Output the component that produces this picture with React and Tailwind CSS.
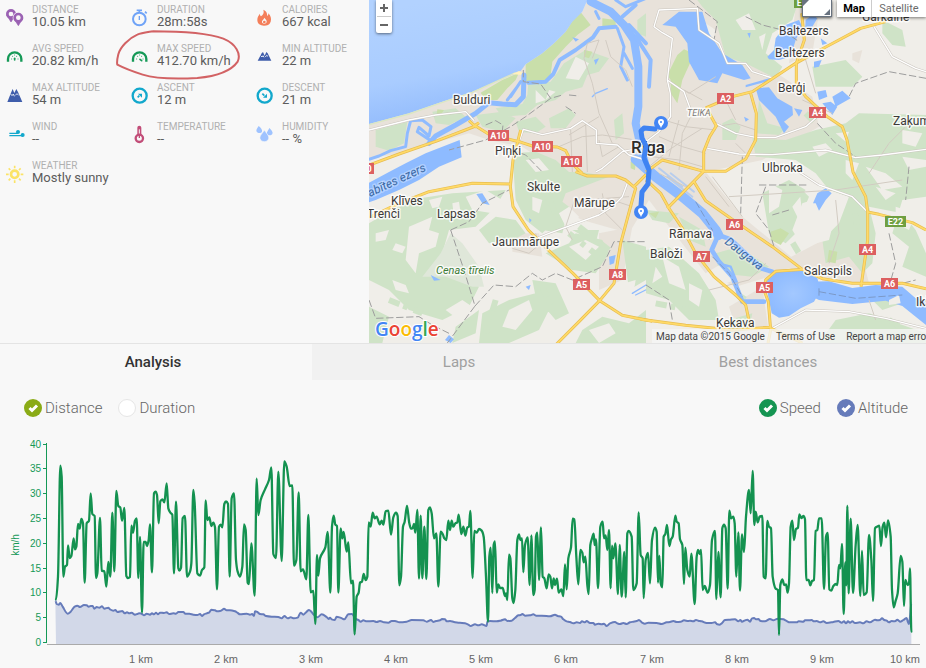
import React, { useState } from "react";

const purple = "#9b62b3";
const green = "#159957";
const navy = "#3f5dab";
const teal = "#12a8cc";

function Pin({ x, y }) {
  return (
    <g transform={`translate(${x} ${y})`}>
      <path d="M-13 3 L0 24 L13 3Z" fill={purple} stroke={purple} strokeWidth="2" strokeLinejoin="round" />
      <circle r="11" fill="#f8f8f8" stroke={purple} strokeWidth="8" />
    </g>
  );
}

function Gauge({ needle }) {
  return (
    <g>
      <path d="M6 41 V33 A19 19 0 0 1 46 33 V41" fill="none" stroke={green} strokeWidth="7" />
      <path d="M17 33h.1M20 25h.1M26 21h.1M32 25h.1M36 33h.1" stroke={green} strokeWidth="3" strokeLinecap="round" />
      <path d={needle} stroke={green} strokeWidth="5" strokeLinecap="round" />
    </g>
  );
}

const icons = {
  distance: (
    <g>
      <Pin x={15} y={15} />
      <circle cx="37" cy="26" r="17" fill="#f8f8f8" />
      <Pin x={37} y={26} />
    </g>
  ),
  duration: (
    <g fill="none" stroke="#6fa3f7">
      <circle cx="25" cy="30" r="19" strokeWidth="6" />
      <path d="M17 4H33" strokeWidth="5" />
      <path d="M25 5V12M42 8L47 13" strokeWidth="5" />
      <path d="M25 21V33" strokeWidth="4" />
    </g>
  ),
  calories: (
    <g>
      <path d="M22 2C34 7 33 16 34 21C37 19 37 16 37 13C44 20 47 29 44 38C41 47 33 50 24 50C13 50 4 44 4 33C4 24 8 20 11 14C12 18 13 20 15 22C21 17 25 12 22 2Z" fill="#f47f5a" />
      <path d="M25 26C28 30 33 33 32 39C31 43 29 44 25 44C20 44 17 41 18 37C19 33 24 31 25 26Z" fill="#f8f8f8" />
      <circle cx="25" cy="39" r="4" fill="#f47f5a" />
    </g>
  ),
  avg: <Gauge needle="M26 31V36" />,
  max: <Gauge needle="M27 34L32 38" />,
  minAlt: (
    <g fill={navy}>
      <path d="M5 38L17 16L21 12L26 23L31 12L35 16L46 38Z" />
      <path d="M14 23L18 27L21 23L24 28M28 27L32 22L36 25" stroke="#dfe5f2" strokeWidth="3" fill="none" />
    </g>
  ),
  maxAlt: (
    <g fill={navy}>
      <path d="M4 45L16 15L20 6L25 18L31 6L36 15L49 45Z" />
      <path d="M14 21L18 26L22 21L25 28M28 25L33 20L38 25" stroke="#dfe5f2" strokeWidth="3" fill="none" />
    </g>
  ),
  ascent: (
    <g>
      <circle cx="26" cy="26" r="21" fill="none" stroke={teal} strokeWidth="7" />
      <path d="M20 31L25 26" stroke={teal} strokeWidth="5" />
      <path d="M21 20H33V32Z" fill={teal} />
    </g>
  ),
  descent: (
    <g>
      <circle cx="26" cy="26" r="21" fill="none" stroke={teal} strokeWidth="7" />
      <path d="M19 20L25 26" stroke={teal} strokeWidth="5" />
      <path d="M33 20V32H21Z" fill={teal} />
    </g>
  ),
  wind: (
    <g stroke={teal} strokeWidth="4" fill={teal}>
      <path d="M10 22H36M10 29H50" />
      <circle cx="36" cy="18" r="4" />
      <circle cx="50" cy="27" r="4" />
    </g>
  ),
  temperature: (
    <g>
      <path d="M25 5V33" stroke="#c24d78" strokeWidth="12" strokeLinecap="round" />
      <path d="M25 10V30" stroke="#f8f8f8" strokeWidth="3" />
      <circle cx="25" cy="37" r="11" fill="#f8f8f8" stroke="#c24d78" strokeWidth="7" />
      <path d="M25 24V36" stroke="#c24d78" strokeWidth="4" />
    </g>
  ),
  humidity: (
    <g fill="#9fc3ff">
      <path d="M8 0C14 5 20 11 18 17C16 22 6 23 2 17C-1 11 4 7 8 0Z" />
      <path d="M40 6C46 12 52 18 49 24C46 29 36 29 33 24C31 18 38 12 40 6Z" />
      <path d="M25 13C32 22 40 30 38 38C35 50 15 50 12 38C10 30 19 22 25 13Z" stroke="#f8f8f8" strokeWidth="2" />
    </g>
  ),
  weather: (
    <g stroke="#fbe366" fill="none">
      <circle cx="26" cy="28" r="11" strokeWidth="8" />
      <path d="M26 2V10M26 46V54M0 28H8M44 28H52M8 10L13 15M39 41L44 46M44 10L39 15M13 41L8 46" strokeWidth="5" />
    </g>
  ),
};

const stats = [
  ["distance", "DISTANCE", "10.05 km"],
  ["duration", "DURATION", "28m:58s"],
  ["calories", "CALORIES", "667 kcal"],
  ["avg", "AVG SPEED", "20.82 km/h"],
  ["max", "MAX SPEED", "412.70 km/h"],
  ["minAlt", "MIN ALTITUDE", "22 m"],
  ["maxAlt", "MAX ALTITUDE", "54 m"],
  ["ascent", "ASCENT", "12 m"],
  ["descent", "DESCENT", "21 m"],
  ["wind", "WIND", "--"],
  ["temperature", "TEMPERATURE", "--"],
  ["humidity", "HUMIDITY", "-- %"],
  ["weather", "WEATHER", "Mostly sunny"],
];

function Stats() {
  return (
    <section className="relative w-[369px] shrink-0">
      <dl className="grid auto-rows-[39px] grid-cols-[125px_125px_1fr] pl-1.5">
        {stats.map(([icon, label, value]) => (
          <div key={label} className="flex gap-2">
            <svg viewBox="0 0 54 54" className="mt-[9px] size-[18px] shrink-0 overflow-visible" aria-hidden="true">
              {icons[icon]}
            </svg>
            <div className="pt-[5px] whitespace-nowrap">
              <dt className="text-[10px] leading-[10px] text-[#b0b0b0]">{label}</dt>
              <dd className="text-[13px] leading-[14px] text-[#5c5c5c]">{value}</dd>
            </div>
          </div>
        ))}
      </dl>
      <svg viewBox="0 0 372 153" className="absolute top-[29px] left-[116px] w-[124px]" aria-hidden="true">
        <path
          d="M110 7C92 10 75 12 64 17C38 28 12 55 7 76C3 92 2 100 4 107C25 118 52 128 80 137C115 148 170 151 244 147C300 142 345 127 365 98C376 74 360 45 322 29C280 14 210 7 110 7"
          fill="none" stroke="#d26264" strokeWidth="6"
        />
      </svg>
    </section>
  );
}

const WATER = "#8ebbff";
const FOREST = "#cfe3c7";
const OPEN = "#f0eee9";
const URBAN = "#e8e2da";
const PARK = "#c9dfaa";

const places = [
  ["Bulduri", 84, 104], ["Piņķi", 126, 155], ["Baltezers", 410, 35], ["Baltezers", 406, 57],
  ["Berģi", 409, 92], ["Zaķumuiža", 524, 125], ["Ulbroka", 393, 172], ["Garkalne", 493, 21],
  ["Skulte", 158, 191], ["Mārupe", 205, 207], ["Klīves", 22, 205], ["Trenči", -2, 218],
  ["Lapsas", 68, 218], ["Jaunmārupe", 123, 246], ["Rāmava", 300, 238], ["Baloži", 281, 258],
  ["Salaspils", 435, 275], ["Ķekava", 347, 327], ["Ikšķile", 547, 306],
];

const shields = [
  ["A10", 119, 130], ["A10", 163, 141], ["A10", 192, 156], ["A2", 348, 93], ["A4", 440, 107],
  ["A5", 204, 279], ["A8", 240, 269], ["A6", 357, 219], ["A7", 324, 251], ["A5", 387, 282],
  ["A4", 490, 244], ["A6", 512, 278], ["E22", 516, 216], ["A10", -16, 163], ["E77", 425, -3],
];

const highways = [
  "M-5 497L90 462L200 424L320 378L362 404L450 425L490 438L565 441L590 452L610 492L640 520",
  "M300 362L322 382M315 378L330 368",
  "M455 390L432 480L424 560L432 620L478 690L540 752L612 820L692 902L760 946L850 964",
  "M424 552L310 550L180 575L90 610L-5 655",
  "M692 902L630 965L560 1035M692 902L735 850L755 730L790 600L800 565L770 540L740 528L655 528L620 515",
  "M831 524L795 560",
  "M1550 65L1475 85L1376 138L1280 190L1213 234L1150 275L1090 290L1012 323L1042 378L1022 410L1004 455L1004 514H1070L1130 477L1160 420L1162 340L1145 280",
  "M1298 40L1306 120L1282 190L1282 250L1310 290L1375 350L1420 380L1434 420L1452 516L1490 590L1496 636V720L1476 860",
  "M831 540L845 552L875 580L900 625L940 685L980 760L1035 830L1100 885L1130 915L1145 985",
  "M895 625L1004 514M1004 514L880 480L831 516M975 545L1010 602L1100 665L1210 740L1300 808L1360 836L1450 850H1600L1671 866",
  "M1496 636L1530 643L1630 668L1671 690",
  "M1306 808L1220 814L1190 840L1185 870L1198 905L1205 990L1197 1029M815 958L950 976L1090 990L1200 982L1300 1029",
];

const minorRoads = [
  "M0 390L120 360L200 345L290 335L315 362",
  "M450 425L463 388L520 404L605 385L640 362L682 390V430L745 435L780 465L831 480",
  "M831 440L760 455L700 505L680 516M490 720L540 700L690 645L730 620L760 590L775 550",
  "M831 425L870 395L905 350L904 280L895 240L910 115L880 98L855 80L870 30L985 25L990 90L1050 130L1075 190L1130 190L1150 215L1210 234",
  "M895 240L945 275L965 330M1040 370L1100 400L1160 412H1220L1310 380L1350 345",
  "M1015 445L1110 462L1210 464L1370 450L1460 473L1540 465L1671 448",
  "M1515 80L1570 170L1640 205L1671 215M1290 516L1350 555L1450 590L1496 636",
  "M1210 985L1310 930L1440 935L1550 955L1671 985",
];

const streets =
  "M670 175L690 120L655 130L645 175L670 250L690 340L730 430M600 405L690 350M570 440L640 410L700 405L800 420M605 390L610 516M650 370L655 516M690 420L700 470L750 440M710 120L725 170L770 210L790 260M840 500L900 450L960 410L1000 385M850 470L930 480L1000 500M870 410L940 440L1010 460M885 360L950 380L1040 390M930 360L900 470M965 350L940 400L930 510M895 240L960 280L1040 230M945 270L1000 300M1040 380L1100 370L1160 390M1100 430L1140 470M1070 300L1100 360M870 520L950 560M1010 530L1080 620M1030 530L1120 650M1080 590L1400 570L1600 540M1310 180L1340 280M1300 300L1390 340M620 590L590 680L610 720M700 580L710 640L760 690M640 600L780 590M730 600L790 620M430 745L480 760L510 735L500 700M1400 600L1410 700L1380 790M1020 870L1140 840L1190 790M1500 900L1520 960M1640 350L1560 430L1500 520";

const boundaries =
  "M463 210V245L515 252L545 295L580 285M545 295L470 350L425 380L350 420L240 450M350 375L380 362L402 375L400 392M400 440L470 465L520 516M600 285L630 288M590 320L620 340M960 0L1045 65L1035 120M1130 50L1180 75L1240 90L1290 125M1671 235L1560 215L1460 250L1440 290M1345 370L1400 430L1460 470M245 690L300 665L340 610L420 570M245 690L285 810L318 918L235 1029M318 918L375 855L440 860L490 820L520 840L560 820L610 840L700 800L735 725H831M0 900L20 955L150 950L190 975L240 1000M1120 470L1115 640M1190 560L1160 640L1200 690L1215 740M1170 555L1320 555M1560 700L1580 790L1560 860L1640 840M831 855L900 900L910 960M1620 500L1610 600M1210 645L1260 630";

function RigaMap() {
  return (
    <svg viewBox="0 0 557 343" preserveAspectRatio="xMinYMin slice" className="absolute inset-0 size-full" role="img" aria-label="Map of Rīga with route">
      <defs>
        <linearGradient id="sea" x1="0.3" y1="0" x2="0.62" y2="1">
          <stop offset="0" stopColor="#b2d2ff" />
          <stop offset="0.55" stopColor="#a9ccff" />
          <stop offset="1" stopColor="#8ab5fb" />
        </linearGradient>
        <radialGradient id="reservoir">
          <stop offset="0" stopColor="#a3c8ff" />
          <stop offset="1" stopColor={WATER} />
        </radialGradient>
      </defs>
      <rect width="557" height="343" fill={OPEN} />
      <g transform="scale(0.333333)" strokeLinejoin="round">
        <path fill={URBAN} d="M0 372L220 305L450 213L640 35L655 0H1000L1060 60L1130 170L1240 230L1330 290L1350 380L1180 480L1010 516L1120 650L1290 790L1200 830L1100 860L1010 820L900 680L840 600L780 700L640 660L560 620L590 520L520 480L460 440L360 420L300 400L210 425L100 460L0 475ZM430 700L510 700L520 770L430 755ZM1280 20L1350 40L1330 160L1260 190ZM1230 790L1400 700L1480 820L1340 840ZM1080 920L1180 860L1200 1000L1110 1010ZM690 700L790 680L760 840L690 870ZM1370 790L1480 770L1500 850L1420 850ZM1450 160L1480 150L1470 190L1450 180Z" />
        <path fill={FOREST} d="
          M478 250L545 245L585 190L650 150L720 175L690 215L655 225L640 262L590 275L560 300L505 315L470 345L400 350L380 325L460 312L475 285Z
          M20 390L115 365L105 430L60 452L20 440Z M190 335L260 325L290 350L240 375L200 370Z M320 345L400 335L440 355L400 395L340 380Z
          M440 365L500 350L530 380L500 400L450 395Z M540 355L600 325L620 345L590 385L545 385Z M735 360L760 340L765 400L740 420Z
          M430 460L500 455L560 480L600 516H640L720 530L590 580L560 660L520 700L470 660L440 600Z
          M805 60L831 40V110L805 100Z
          M985 0H1290L1270 60L1210 100L1190 160L1240 200L1220 235L1130 190L1070 170L1040 60L1000 20Z
          M1330 200L1430 180L1480 230L1450 260L1340 260Z M1540 60L1600 90L1610 140L1570 135L1540 100Z
          M1060 370L1090 355L1115 380L1100 420L1060 420Z M1170 300L1195 370L1250 385L1230 405L1160 400Z
          M1150 415L1250 420L1340 390L1430 370L1470 340L1671 345V590L1600 600L1570 700L1620 740L1600 800L1671 830V760L1640 690L1600 640L1500 620L1520 700L1510 790L1480 820L1440 770L1370 790L1360 720L1410 670L1440 590L1380 570L1340 520L1280 480L1160 470Z
          M1180 580L1260 540L1310 570L1270 620L1300 680L1250 730L1200 700L1190 640Z
          M1290 560L1320 590L1300 640Z
          M0 670L120 600L250 580L410 570L380 620L320 680L240 690L220 760L330 860L300 920L220 960L120 930L60 870L0 840Z
          M330 690L380 650L440 660L470 700L430 720L360 730Z M440 560L520 560L600 620L580 700L520 690Z
          M530 760L600 730L620 700L700 720L720 760L680 820L610 810Z M610 690L690 690L680 730Z
          M340 940L420 900L500 880L540 930L510 990L420 1029H330Z M490 840L560 850L600 940L560 960L500 890Z
          M700 950L780 970L831 930V1029H620L640 990Z M760 720L831 740V840L780 870Z
          M831 750L900 740L990 820L1040 900L1050 960L960 960L900 900L831 880Z
          M1040 760L1110 740L1200 800L1150 830L1050 820Z M1080 960L1150 940L1140 990L1080 1000Z
          M831 630L930 640L900 670L850 660Z M930 650L1000 690L1010 740L960 720Z
          M1400 960L1500 940L1671 1000V1029H1350Z M1500 890L1560 880L1600 910L1540 930Z
          M250 1029L260 980L330 930L320 1000Z M0 920L60 950L40 1029H0Z" />
        <path fill="#dfe7d9" d="M245 700L280 730L330 800L345 860L310 860L230 830L160 830L215 760Z" />
        <path fill={OPEN} d="
          M500 270L530 300L500 310Z M540 270L560 275L530 300Z M620 170L660 190L630 240L590 235Z M470 480L510 475L540 510L500 516Z
          M570 640L600 620L630 650L600 700Z M120 680L190 650L180 690L210 700L200 740L150 760L140 820L110 780Z
          M180 600L220 590L210 620L190 625Z M80 730L110 740L100 760L70 750Z M70 840L110 855L120 880L80 870Z
          M290 590L350 570L400 600L370 640L310 630Z M400 760L450 770L480 800L440 840L390 850Z M230 930L280 900L310 920L270 960Z
          M420 930L480 900L490 930L440 990L400 980Z M560 700L600 720L570 740Z M600 740L650 720L690 740L650 780Z
          M1330 440L1370 430L1390 450L1350 470Z M1200 550L1240 570L1230 620L1200 640Z M1490 500L1550 520L1600 560L1540 570Z
          M1600 390L1660 400L1640 440L1600 430Z M1010 820L1060 790L1100 840L1040 860Z M880 770L930 800L950 870L900 850Z
          M1100 60L1140 40L1160 90L1120 90Z M1580 620L1640 640L1620 690L1580 670Z M730 860L800 840L790 900L740 900Z
          M1300 610L1360 590L1400 640L1380 720L1300 740L1270 690Z M1540 680L1580 720L1560 770L1530 740Z
          M20 700L60 690L50 720L20 725Z M250 610L270 605L275 640L255 650Z M40 640L80 630L70 660Z M490 590L520 600L510 640L490 630Z
          M1430 480L1470 490L1450 540L1430 520Z M1600 470L1671 480V500L1620 510Z M1190 480L1240 485L1230 500L1190 498Z M1520 560L1580 580L1550 600Z M1400 400L1440 395L1430 425Z
          M1010 70L1040 90L1030 130L1010 110Z M1170 110L1190 100L1180 150Z M860 800L880 830L850 850Z M960 850L1000 870L990 920L960 900Z M660 990L720 970L740 1000L690 1029Z" />
        <path fill="none" stroke={FOREST} strokeWidth="18" d="M600 700L690 770M630 680L720 750M60 900L160 940M560 640L520 560M1230 660L1290 760M1460 640L1470 740M520 860L560 940M1310 340L1340 370M1560 960L1640 1010M860 910L960 930M1100 880L1130 900M380 900L350 1000" strokeDasharray="34 12 14 20" />
        <path fill={PARK} d="M470 193L520 160L555 130L590 95L630 30L665 75L625 105L590 140L550 185L545 225L530 243L470 243ZM335 278L400 240L450 218L440 240L415 265L385 300L350 300ZM700 55L740 60V82L700 78ZM645 150L670 155L660 175L645 170ZM205 328L225 330L215 345H203ZM925 165L945 148L962 155L965 185L940 240L925 310L905 280L905 240L895 225ZM1205 695L1235 685L1260 700L1235 735L1205 720ZM1380 750L1405 755L1400 790L1375 785ZM785 485L800 485L798 510L785 505ZM840 640L870 635L860 655Z" />
        <path fill="url(#sea)" d="M0 0H655L640 35L610 65L590 95L555 130L520 160L470 193L455 213L380 245L310 275L220 305L120 340L0 372Z" />
        <path fill="none" stroke="#dbe7c3" strokeWidth="4" d="M0 374L120 342L220 307L310 277L440 218" />
        <path d="M430 222L450 213L461 218L456 225Z" fill="#fff0bd" />
        <g fill="none" stroke={WATER} strokeLinecap="round">
          <path strokeWidth="12" d="M740 80L690 85L672 112L620 150L572 180L553 222L530 245L478 248" />
          <path strokeWidth="15" d="M465 225L463 290L440 314L400 312L360 308L320 340L260 375L200 408L180 430" />
          <path strokeWidth="9" d="M190 425L145 395L150 382L180 408L186 380L160 360L125 362L115 400L110 440L65 452L30 468L0 478M455 245L425 290M445 260L415 300" />
          <path strokeWidth="24" d="M665 5L725 35L765 75L795 120L808 200L808 320L800 370L815 440L831 500" />
          <path strokeWidth="12" d="M760 50L800 15M780 75L831 130M800 110L845 180L840 260" />
          <path strokeWidth="9" d="M745 85L765 140L755 200L775 240M765 160L790 205M740 0L770 20L831 -5M690 55L680 35" />
          <path strokeWidth="4" d="M715 266L680 280L670 290" />
          <path strokeWidth="30" d="M800 478L860 530L940 590L1000 640L1040 690L1048 705" />
          <path strokeWidth="6" d="M895 530L970 590M870 505L940 560M905 520L975 575" stroke="#b8cdec" />
          <path strokeWidth="14" d="M1048 705L1085 718L1130 760L1180 806L1210 815M1048 705L1028 750L1050 785L1090 830L1120 905L1185 905" />
          <path strokeWidth="7" d="M1065 795L1085 800L1105 850" />
          <path strokeWidth="4" d="M790 880L831 855M800 885L830 870" />
        </g>
        <g fill={WATER}>
          <path d="M880 75L930 35L1000 35L1020 100L1060 160L1120 195L1145 235L1125 240L1060 220L1045 250L990 240L960 185L955 130L920 80Z" />
          <path d="M1130 255L1210 232L1190 245L1130 262Z M1160 265L1200 262L1225 295L1270 320L1272 345L1245 365L1260 380L1245 400L1220 350L1170 300Z" />
          <path d="M1195 170L1215 150L1220 115L1250 75L1290 60L1300 80L1280 120L1265 170L1230 180L1200 178Z M1310 60L1330 45L1345 55L1330 80L1308 95Z M1355 115L1375 130L1360 135ZM1335 185L1358 180L1350 200L1335 203Z" />
          <path d="M1345 275L1370 270L1375 290L1350 300ZM1390 290L1420 272L1445 295L1400 320ZM1360 310L1385 305L1405 320L1390 345ZM1275 325L1300 330L1290 350Z" />
          <path d="M1332 610L1345 580L1370 565L1388 580L1370 600L1350 632L1340 610Z" />
          <path d="M0 548L60 516L110 490L170 460L272 420L278 472L235 490L210 500L150 540L90 570L20 600L0 607Z" />
          <path d="M322 582L340 580L362 615L340 610ZM185 825L215 840L195 842ZM720 770L740 765L735 790L722 795ZM470 860L485 855L480 870ZM480 655L488 660L482 668ZM675 180L690 175L680 195ZM610 112L630 118L620 125ZM228 1020L240 1005L255 1018L245 1029ZM1125 350L1140 358L1130 365ZM1135 100L1145 98L1142 115Z" />
          <path d="M1315 845L1380 844L1450 864L1520 855L1600 860L1640 895L1671 900V975L1640 950L1600 918L1550 902L1450 912L1350 900L1330 890Z" />
        </g>
        <path d="M1210 816L1306 808L1345 835L1355 870L1335 905L1295 925L1260 948L1230 953L1208 940L1200 900L1190 850Z" fill="url(#reservoir)" />
        <path d="M1560 900L1590 885L1595 910L1560 915Z" fill={OPEN} />
        <path d={streets} fill="none" stroke="#d2cbc2" strokeWidth="3" />
        <path d={boundaries} fill="none" stroke="#9d9d9d" strokeWidth="3" strokeDasharray="22 8" />
        <path d="M980 605L1030 690L1020 720M1350 865V890M1350 875L1460 895L1600 885M1030 770L1080 820L1120 890" fill="none" stroke="#7b99c7" strokeWidth="3" strokeDasharray="22 8" />
        {minorRoads.map((d) => <path key={d} d={d} fill="none" stroke="#cac5be" strokeWidth="7" />)}
        {minorRoads.map((d) => <path key={d} d={d} fill="none" stroke="#fff" strokeWidth="4" />)}
        {highways.map((d) => <path key={d} d={d} fill="none" stroke="#e7bd50" strokeWidth="9" />)}
        {highways.map((d) => <path key={d} d={d} fill="none" stroke="#ffda68" strokeWidth="5" />)}
      </g>

      <g fontFamily="Roboto, sans-serif" fontSize="12" fill="#3c3a38" stroke="#fff" strokeOpacity="0.8" strokeWidth="3" strokeLinejoin="round" className="[paint-order:stroke]">
        {places.map(([name, x, y]) => <text key={name + y} x={x} y={y} className="[paint-order:stroke]">{name}</text>)}
        <text x="262" y="153" fontSize="17" fontWeight="500" fill="#2e2c2a" className="[paint-order:stroke]">Rīga</text>
        <text x="318" y="116" fontSize="9" fontStyle="italic" fill="#7d7a77" className="[paint-order:stroke]">TEIKA</text>
        <text x="67" y="274" fontSize="11" fontStyle="italic" fill="#3f7c37" className="[paint-order:stroke]">Cenas tīrelis</text>
        <text transform="translate(1 197) rotate(-25)" fontStyle="italic" fill="#3d6aa5" strokeOpacity="0.3" className="[paint-order:stroke]">abītes ezers</text>
        <text transform="translate(355 243) rotate(38)" fontStyle="italic" fill="#3d6aa5" strokeOpacity="0.3" className="[paint-order:stroke]">Daugava</text>
      </g>

      <g fill="none" stroke="#3f83f2" strokeWidth="5" strokeLinecap="round" strokeLinejoin="round">
        <path d="M286 129L275 128L272 131L273 138L277 146L275 158L280 170L279 184L273 192L272 206" />
      </g>
      {[[292, 123], [272, 212]].map(([x, y]) => (
        <g key={x} transform={`translate(${x} ${y})`}>
          <circle r="7" fill="#4285f4" />
          <path d="M0 5C-1 2-3 1-3-1A3 3 0 0 1 3-1C3 1 1 2 0 5Z" fill="#fff" />
          <circle cy="-1" r="1" fill="#4285f4" />
        </g>
      ))}

      <g fontFamily="Roboto, sans-serif" fontSize="9" fontWeight="700" fill="#fff" textAnchor="middle">
        {shields.map(([name, x, y]) => {
          const w = name.length > 2 ? 21 : 17;
          return (
            <g key={name + x}>
              <rect x={x} y={y} width={w} height="11" fill={name[0] === "E" ? "#6f9f41" : "#dc5f60"} />
              <text x={x + w / 2} y={y + 9}>{name}</text>
            </g>
          );
        })}
      </g>
      <text x="6" y="336" fontFamily="'Open Sans', sans-serif" fontSize="19" fontWeight="600" stroke="#fff" strokeWidth="2" className="[paint-order:stroke]">
        <tspan fill="#4285f4">G</tspan><tspan fill="#ea4335">o</tspan><tspan fill="#fbbc05">o</tspan>
        <tspan fill="#4285f4">g</tspan><tspan fill="#34a853">l</tspan><tspan fill="#ea4335">e</tspan>
      </text>
    </svg>
  );
}

function MapPanel() {
  return (
    <section className="relative h-[343px] min-w-0 flex-1 overflow-hidden bg-[#f0eee9]">
      <RigaMap />
      <div className="absolute top-0 left-[7px] flex w-4 flex-col items-center rounded-b-xs bg-white shadow-[0_1px_3px_rgba(0,0,0,.5)]">
        <button aria-label="Zoom in" className="flex h-[17px] w-3.5 items-center justify-center border-b border-[#ccc]">
          <svg viewBox="0 0 8 8" className="size-2"><path d="M4 0V8M0 4H8" stroke="#666" strokeWidth="2" /></svg>
        </button>
        <button aria-label="Zoom out" className="flex h-4 w-3.5 items-center justify-center">
          <svg viewBox="0 0 8 8" className="size-2"><path d="M0 4H8" stroke="#666" strokeWidth="2" /></svg>
        </button>
      </div>
      <div className="absolute top-0 right-0 flex h-[17px] gap-[5px] text-[11px] leading-[17px] whitespace-nowrap">
        <button aria-label="Full screen" className="w-[30px] border border-t-0 border-[#68727f] bg-white shadow-[0_1px_3px_rgba(0,0,0,.7)]">
          <svg viewBox="0 0 28 16" className="h-4 w-7"><path d="M0 0H6L0 6ZM27 9V15H21Z" fill="#68727f" /></svg>
        </button>
        <div className="flex bg-white shadow-[0_1px_3px_rgba(0,0,0,.5)]">
          <button className="w-[35px] border-r border-[#ccc] font-bold text-black">Map</button>
          <button className="w-[54px] text-[#6b6b6b]">Satellite</button>
        </div>
      </div>
      <div className="absolute right-0 bottom-0 flex h-3.5 w-[274px] gap-[11px] bg-[#f5f5f5]/80 pl-1 text-[10px] leading-[15px] whitespace-nowrap text-[#444]">
        <span>Map data ©2015 Google</span>
        <a href="#terms">Terms of Use</a>
        <a href="#report">Report a map error</a>
      </div>
    </section>
  );
}

function Tabs() {
  const [active, setActive] = useState("Analysis");
  const pads = { Analysis: "pr-1.5", Laps: "", "Best distances": "pl-1" };
  return (
    <nav role="tablist" className="grid h-[37px] grid-cols-[312fr_294fr_320fr] border-t border-[#e4e4e4] text-[15px]">
      {Object.keys(pads).map((name) => (
        <button
          key={name}
          role="tab"
          aria-selected={name === active}
          onClick={() => setActive(name)}
          className={`${pads[name]} ${name === active ? "font-medium text-[#333]" : "bg-[#f1f1f1] font-normal text-[#a0a0a0]"}`}
        >
          {name}
        </button>
      ))}
    </nav>
  );
}

function Toggle({ label, tint, ...input }) {
  return (
    <label className="flex items-center gap-[3px]">
      <span className="relative size-[18px]">
        <input {...input} className={`peer block size-[18px] appearance-none rounded-full border border-[#e6e6e6] bg-white checked:border-0 ${tint}`} />
        <svg viewBox="0 0 18 18" className="pointer-events-none absolute inset-0 hidden peer-checked:block" aria-hidden="true">
          <path d="M5.500 9L8 11.500L13 6.500" fill="none" stroke="#fff" strokeWidth="3" />
        </svg>
      </span>
      <span>{label}</span>
    </label>
  );
}

const speed = [
  [0, [168,508,174,440,181,107,185,140,190,440,195,410,201,405,204,346,209,384,214,378,221,325,225,358,229,350,234,282,239,296,244,267,249,280,254,458,260,280,267,272,272,190,277,252,284,258,288,444,292,430,300,264,305,422,313,424,319,470,325,396,331,440,337,248,343,424,349,183,355,228,361,233,366,272,373,234,379,438,384,444,390,441,394,287,399,308,405,272,410,265,415,444,420,321,426,548,431,336,437,336,441,348,446,330,450,283,456,427,462,190,467,185,471,195,476,280,481,214,487,208,493,217,500,160,505,235,511,248,517,254,522,430,528,215,535,415,538,422,543,414,548,265,555,258,561,440,570,425,574,400,580,180,584,220,592,430,600,437,606,420,613,412,617,211,622,270,628,262,634,288,640,278,645,292,651,478,657,290,662,284,667,292,673,222,678,214,684,222,689,440,695,205,702,190]],
  [690, [18,390,23,425,30,440,37,410,42,283,47,300,53,458,57,462,64,340,74,497,80,146,85,255,92,210,105,178,117,150,124,112,130,372,138,384,145,125,155,393,163,94,170,110,179,168,187,166,192,407,199,390,206,187,212,424,219,418,229,448,235,255,242,487,250,483,256,582,261,375,265,437,270,385,286,352,293,306,301,488,306,290,311,257,316,284,321,288,325,488,332,295,337,325,341,306,350,365,355,337,363,460,369,452,374,613,380,500,386,488,390,458,396,455,401,432,407,450,412,440,416,277,422,290,428,248,434,265,440,260,449,283,455,272,460,284,467,244,475,242,483,314,490,262,498,248,503,258,508,466,513,440,519,290,524,275,531,228,538,280,543,296,548,294,552,282,556,308,562,240,567,446,572,257,577,445,583,290,589,447,595,240,600,232,605,250,612,325,619,310,625,470,632,305,638,312,643,325,649,330,655,272,660,300,665,272,670,290,676,280,682,277,686,254]],
  [1380, [4,312,10,290,16,317,22,292,27,290,31,243,38,444,43,303,50,308,57,297,65,302,71,320,78,440,84,575,88,380,92,353,97,489,101,345,105,334,110,488,115,463,120,474,128,474,135,498,138,490,142,510,147,374,151,385,157,505,161,519,166,480,172,330,177,313,181,330,186,325,190,427,195,345,203,322,209,465,214,316,220,495,224,480,228,320,232,308,237,450,243,292,248,440,253,445,260,475,266,433,271,440,276,475,281,445,285,465,291,446,296,488,304,478,310,498,315,403,320,478,325,385,333,352,338,266,343,268,349,380,355,463,361,360,367,368,371,397,376,380,382,465,386,492,391,345,396,325,401,311,404,345,408,328,414,474,421,290,428,275,432,325,437,316,442,360,447,300,452,475,456,347,460,385,466,340,474,492,479,345,485,500,493,366,497,502,502,310,506,303,515,320,520,480,530,460,536,247,542,375,548,385,551,504,557,390,564,369,570,460,576,330,585,293,590,305,594,458,598,377,602,460,607,472,611,320,616,312,621,285,628,348,633,328,638,320,646,257,650,275,656,280,660,328,667,345,672,462,676,353,682,420,689,440]],
  [2070, [4,371,14,522,20,380,24,360,29,372,33,360,38,480,44,468,53,488,60,465,66,330,75,303,79,507,85,366,92,502,97,295,102,284,107,295,113,476,118,242,123,265,130,260,134,280,139,440,145,307,150,482,156,313,162,366,168,260,177,180,182,250,188,123,193,285,197,245,203,277,209,260,217,258,221,440,227,445,232,273,237,290,243,295,248,440,257,476,264,480,267,615,271,465,277,448,283,465,288,463,293,488,297,460,302,290,307,272,312,330,318,297,324,293,328,253,334,264,340,258,345,268,349,450,356,450,361,466,366,453,372,450,377,303,382,300,387,265,395,265,402,477,408,320,413,309,418,478,424,482,430,468,438,462,442,465,447,405,451,415,456,342,461,552,466,397,469,466,472,228,476,490,482,266,489,489,497,345,503,285,511,498,516,363,521,495,530,487,537,315,544,390,549,513,555,295,561,290,568,287,573,348,578,290,583,278,588,322,594,271,602,320,606,480,611,532,617,512,623,490,632,378,637,395,642,528,646,450,653,465,657,460,660,415,664,605]],
];

const altitude = [
  [0, [166,512,170,522,176,524,181,519,188,530,203,551,212,545,224,530,232,527,240,531,252,525,260,526,266,530,272,528,278,528,283,536,290,531,298,533,306,529,313,536,325,533,330,538,340,542,346,540,352,546,367,543,374,550,381,547,388,550,395,548,405,554,414,551,420,550,426,552,432,556,440,551,450,554,456,550,462,553,468,548,474,553,480,548,492,549,500,547,507,552,520,550,528,551,535,546,550,546,556,551,568,551,580,554,592,555,600,552,606,558,612,553,620,550,628,547,634,539,645,541,652,544,660,543,666,540,672,536,680,541,690,541]],
  [690, [0,541,15,544,22,548,30,553,50,551,60,554,66,552,72,558,75,544,82,546,90,552,100,553,108,558,125,560,145,561,155,565,163,558,173,565,182,562,192,565,203,563,212,548,220,554,230,545,237,540,244,545,250,553,262,562,275,553,290,561,296,567,300,563,305,568,314,570,320,560,328,562,336,565,343,568,355,553,366,552,376,566,385,570,392,575,400,571,410,574,430,573,440,576,450,573,462,577,475,578,485,573,495,573,508,577,530,575,545,570,580,571,590,575,603,570,610,576,618,573,630,571,636,567,645,568,650,574,660,573,672,576,685,578]],
  [1380, [0,578,15,580,25,584,32,588,45,583,55,586,65,583,80,588,82,575,90,573,110,574,122,572,135,568,142,573,155,572,165,564,175,556,182,555,187,552,195,557,210,556,220,553,228,557,260,558,270,559,285,554,293,558,303,560,310,568,320,574,330,576,340,580,350,577,360,579,366,574,375,577,380,573,390,579,400,579,405,584,415,581,425,583,432,581,440,588,450,580,465,576,472,580,480,582,490,579,500,582,510,577,520,575,530,573,537,570,545,577,555,581,565,578,590,579,605,582,620,577,630,576,640,573,650,576,662,575,672,571,685,573]],
  [2070, [0,572,10,574,18,570,25,572,35,574,50,579,65,579,75,577,82,583,88,584,95,580,105,570,120,569,135,568,145,574,151,570,156,575,165,571,172,569,180,575,186,565,192,564,198,568,205,567,212,573,225,574,240,567,250,571,263,566,280,568,288,572,300,577,320,577,326,574,340,575,345,571,355,571,365,570,372,574,380,573,390,577,400,574,410,579,430,576,445,573,455,578,462,574,468,580,474,574,480,578,487,574,495,579,510,577,520,580,530,574,540,577,555,569,562,571,570,570,576,565,583,570,590,572,597,577,605,573,615,574,622,569,630,575,640,570,646,566,650,564,653,574,657,582,660,560,664,520]],
];

function toPoints(series) {
  return series.flatMap(([offset, values]) => {
    const points = [];
    for (let i = 0; i < values.length; i += 2) points.push([(values[i] + offset) / 3, values[i + 1] / 3]);
    return points;
  });
}

// Drop samples that repeat a distance, since a slope between them is undefined.
function distinct(points) {
  return points.filter(([x], i) => i === 0 || x > points[i - 1][0]);
}

// Monotone cubic interpolation, so that peaks stay on their samples.
function curve(p) {
  const d = p.slice(1).map((q, i) => (q[1] - p[i][1]) / (q[0] - p[i][0]));
  const m = p.map((_, i) => {
    const a = d[i - 1];
    const b = d[i];
    if (a === undefined || b === undefined || a * b <= 0) return 0;
    return (2 * a * b) / (a + b);
  });
  return p.slice(1).reduce((path, [x, y], i) => {
    const [px, py] = p[i];
    const h = (x - px) / 3;
    return `${path}C${px + h} ${py + m[i] * h} ${x - h} ${y - m[i + 1] * h} ${x} ${y}`;
  }, `M${p[0][0]} ${p[0][1]}`);
}

const speedPath = curve(distinct(toPoints(speed)));
const altitudePath = curve(distinct(toPoints(altitude)));
const kmTicks = [141, 226, 311, 396, 481, 566, 652, 737, 822, 905];

function Chart({ showSpeed, showAltitude }) {
  return (
    <svg viewBox="0 0 926 238" className="block w-full" role="img" aria-label="Speed and altitude by distance" fontFamily="'Liberation Sans', Arial, sans-serif">
      {showAltitude && (
        <g>
          <path d={`${altitudePath}V214H56Z`} fill="#d2d8e8" />
          <path d={altitudePath} fill="none" stroke="#667bba" strokeWidth="2" />
        </g>
      )}
      <path d="M47 214.500H920" stroke="#aaa" />
      {showSpeed && <path d={speedPath} fill="none" stroke="#149250" strokeWidth="2.300" strokeLinejoin="round" strokeLinecap="round" />}
      <path d="M46.500 13V213" stroke={green} />
      <g fontSize="10" fill={green} textAnchor="end">
        {[0, 5, 10, 15, 20, 25, 30, 35, 40].map((v) => {
          const y = Math.round(212 - v * 4.96);
          return (
            <g key={v}>
              <path d={`M43 ${y + 0.5}H47`} stroke={green} />
              <text x="41" y={y + 4}>{v}</text>
            </g>
          );
        })}
      </g>
      <text transform="translate(19 115) rotate(-90)" textAnchor="middle" fontSize="10" fill={green}>km/h</text>
      <g fontSize="11" fill="#666" textAnchor="middle">
        {kmTicks.map((x, i) => <text key={x} x={x} y="233">{i + 1} km</text>)}
      </g>
    </svg>
  );
}

export default function App() {
  const [axis, setAxis] = useState("distance");
  const [showSpeed, setShowSpeed] = useState(true);
  const [showAltitude, setShowAltitude] = useState(true);
  return (
    <main className="min-h-screen overflow-hidden bg-[#f8f8f8] font-[Roboto,sans-serif]">
      <div className="flex">
        <Stats />
        <MapPanel />
      </div>
      <Tabs />
      <div className="flex h-[50px] items-center justify-between pt-1.5 pr-[18px] pl-6 text-[15px] font-light text-[#666]">
        <div className="flex gap-4">
          <Toggle type="radio" name="axis" label="Distance" tint="checked:bg-[#8aab16]" checked={axis === "distance"} onChange={() => setAxis("distance")} />
          <Toggle type="radio" name="axis" label="Duration" tint="checked:bg-[#8aab16]" checked={axis === "duration"} onChange={() => setAxis("duration")} />
        </div>
        <div className="flex gap-4">
          <Toggle type="checkbox" label="Speed" tint="checked:bg-[#159552]" checked={showSpeed} onChange={(e) => setShowSpeed(e.target.checked)} />
          <Toggle type="checkbox" label="Altitude" tint="checked:bg-[#667bba]" checked={showAltitude} onChange={(e) => setShowAltitude(e.target.checked)} />
        </div>
      </div>
      <Chart showSpeed={showSpeed} showAltitude={showAltitude} />
    </main>
  );
}
